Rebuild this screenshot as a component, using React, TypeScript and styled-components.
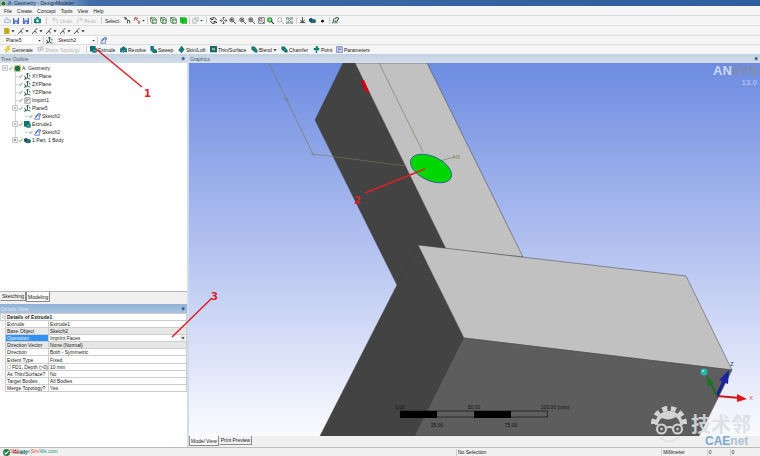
import React from "react";
import styled, { createGlobalStyle } from "styled-components";

const Global = createGlobalStyle`
  * { box-sizing: border-box; }
  body { margin: 0; background: #f0f0f0; color: #222; font: 5px/8px "Liberation Sans", Arial, sans-serif; }
  button, select, input { font: inherit; color: inherit; margin: 0; padding: 0; border: 0; background: none; }
`;

const Shell = styled.div`
  position: relative;
  display: flex;
  flex-direction: column;
  height: 100vh;
  overflow: hidden;
`;
const TitleBar = styled.header`
  display: flex;
  align-items: center;
  flex: none;
  height: 6px;
  overflow: hidden;
  gap: 2px;
  padding: 0 1px;
  color: #10233d;
  background: linear-gradient(90deg, #8fb0d5 0, #a9c1dc 50px, #3f6ca8 90px, #2f5e9e 100%);
`;
const MenuBar = styled.nav`
  display: flex;
  flex: none;
  height: 10px;
  align-items: center;
  gap: 5px;
  padding: 0 4px;
  border-bottom: 1px solid #dcdcdc;
  background: #f5f5f5;
`;
const MenuButton = styled.button`
  line-height: 8px;
`;
const Toolbar = styled.div`
  display: flex;
  flex: none;
  height: 10px;
  align-items: center;
  gap: 2px;
  padding: 0 4px;
  border-bottom: 1px solid #dedede;
  background: #f5f5f5;
  white-space: nowrap;
`;
const FeatureBar = styled(Toolbar)`
  height: 9px;
  border: 0;
`;
const PlaneBar = styled(Toolbar)`
  height: 9px;
`;
const ToolButton = styled.button<{ $w?: number; $off?: boolean }>`
  display: flex;
  flex: none;
  align-items: center;
  gap: 1px;
  height: 8px;
  width: ${(p) => (p.$w ? `${p.$w}px` : "auto")};
  color: ${(p) => (p.$off ? "#b8b8b8" : "#222")};
`;
const Separator = styled.i<{ $m?: number }>`
  flex: none;
  width: 1px;
  height: 7px;
  margin: 0 ${(p) => p.$m ?? 0}px;
  background: #cfcfcf;
`;
const Combo = styled.div<{ $w: number }>`
  display: flex;
  align-items: center;
  flex: none;
  width: ${(p) => p.$w}px;
  height: 8px;
  background: #fff;
  select { appearance: none; flex: 1; min-width: 0; height: 8px; padding: 0 2px; outline: 0; }
`;
const Workspace = styled.main`
  display: grid;
  flex: 1;
  min-height: 0;
  grid-template-columns: minmax(187px, 24.6%) minmax(0, 1fr);
  gap: 2px;
  background: #d0dded;
`;
const Side = styled.aside`
  display: flex;
  flex-direction: column;
  min-height: 0;
  background: #f0f0f0;
`;
const PanelHeader = styled.h2<{ $active?: boolean }>`
  display: flex;
  flex: none;
  justify-content: space-between;
  align-items: center;
  height: 9px;
  margin: 0;
  padding: 0 2px 0 1px;
  font: inherit;
  color: ${(p) => (p.$active ? "#d9e7f5" : "#4e5d70")};
  background: ${(p) => (p.$active ? "linear-gradient(#8fb2d6, #a9c4e0)" : "linear-gradient(#c3d1e0, #d3deea)")};
`;
const Tree = styled.ul`
  flex: 1;
  min-height: 0;
  margin: 0;
  padding: 1px 0 0;
  list-style: none;
  background: #fff;
`;
const TreeItem = styled.li<{ $depth: number; $last?: boolean }>`
  display: flex;
  align-items: center;
  height: 8px;
  gap: 1px;
  padding-left: ${(p) => [2, 12, 22][p.$depth]}px;
  background: linear-gradient(#d2d2d2, #d2d2d2) ${(p) => (p.$depth ? "15px" : "-9px")} 0 / 1px ${(p) => (p.$last ? "50%" : "100%")} no-repeat;
`;
const Blank = styled.i`
  flex: none;
  width: 6px;
  height: 1px;
  background: linear-gradient(#d2d2d2, #d2d2d2) 3px 0 no-repeat;
`;
const TabStrip = styled.div`
  display: flex;
  flex: none;
  align-items: flex-start;
  height: 13px;
  border-top: 1px solid #b4b4b4;
  background: #f0f0f0;
`;
const Tab = styled.button<{ $on?: boolean }>`
  height: ${(p) => (p.$on ? 10 : 9)}px;
  padding: 0 1px;
  border: 1px solid #8b8b8b;
  border-top: 0;
  border-left-color: ${(p) => (p.$on ? "#8b8b8b" : "transparent")};
  background: ${(p) => (p.$on ? "#fafafa" : "#f0f0f0")};
`;
const Details = styled.section`
  flex: none;
  height: 143px;
  background: #fff;
`;
const Properties = styled.table`
  width: 100%;
  height: 79px;
  border-collapse: collapse;
  table-layout: fixed;
  line-height: 6px;
  td, th { padding: 0 1px; border: 1px solid #cdcdcd; text-align: left; font-weight: 400; white-space: nowrap; overflow: hidden; }
  thead th { font-weight: 700; }
  col:nth-child(1) { width: 5px; }
  col:nth-child(2) { width: 43px; }
`;
const Row = styled.tr<{ $grey?: boolean; $on?: boolean }>`
  td { background: ${(p) => (p.$grey ? "#e6e6e6" : "#fff")}; }
  th { background: ${(p) => (p.$on ? "#3292f2" : p.$grey ? "#e9e9e9" : "#fff")}; color: ${(p) => (p.$on ? "#e9f4ff" : "#222")}; }
  td:first-child { border-color: transparent #cdcdcd transparent transparent; background: #f4f4f4; }
`;
const Operation = styled.div`
  display: flex;
  height: 6px;
  select { appearance: none; flex: 1; outline: 0; height: 6px; line-height: 6px; }
`;
const DropMark = styled.span`
  display: grid;
  place-items: center;
  width: 5px;
  background: #eaeaea;
`;
const Check = styled.label`
  display: flex;
  align-items: center;
  gap: 1px;
  input { appearance: none; flex: none; width: 4px; height: 4px; border: 1px solid #cfcfcf; }
`;
const Viewer = styled.section`
  display: flex;
  flex-direction: column;
  min-width: 0;
  min-height: 0;
`;
const Scene = styled.svg`
  display: block;
  flex: 1;
  min-height: 0;
  width: 100%;
  background: #6d8ce1;
`;
const ViewTabs = styled(TabStrip)`
  height: 11px;
  border: 0;
`;
const StatusBar = styled.footer`
  display: grid;
  flex: none;
  grid-template-columns: 60% 27% 6% 3% 1fr;
  align-items: center;
  height: 9px;
  border-top: 1px solid #bcbcbc;
  background: #f0f0f0;
  span { padding-left: 1px; border-left: 1px solid #d0d0d0; line-height: 7px; }
`;
const Ready = styled.div`
  display: flex;
  align-items: center;
  gap: 3px;
  padding-left: 3px;
`;
const ReadyText = styled.div`
  position: relative;
  line-height: 8px;
`;
const SiteMark = styled.b`
  position: absolute;
  left: -3px;
  top: -1px;
  color: #2d9c85;
  font-weight: 400;
  white-space: nowrap;
  em { font-style: normal; color: #e3483b; }
`;
const Overlay = styled.svg`
  position: absolute;
  inset: 0;
  width: 100%;
  height: 100%;
  pointer-events: none;
`;
const Glyph = styled.svg`
  display: block;
  flex: none;
`;

type Kind =
  | "save" | "open" | "camera" | "undo" | "redo" | "cursor" | "pick" | "cube" | "cubeOn" | "extend"
  | "rotate" | "pan" | "zoom" | "zoomBox" | "zoomOn" | "zoomOff" | "fit" | "axis" | "body" | "dot" | "look"
  | "yellow" | "edge" | "plane" | "sketch" | "bolt" | "share" | "extrude" | "revolve" | "sweep" | "skin"
  | "thin" | "blend" | "point" | "param" | "import" | "geo" | "down" | "check" | "plus" | "minus" | "pin" | "ok";

const teal = "#167f78";
const shapes: Record<Kind, React.ReactNode> = {
  open: <path d="M1 8V4l3-3 1 3h4v4z" fill="#e9eef8" stroke="#8aa0c8" />,
  save: <><path d="M0 0h10v10H0z" fill="#5068b8" /><path d="M2 0h6v4H2z" fill="#e5eefc" /><path d="M3 6h4v4H3z" fill="#b9cbec" /></>,
  camera: <><rect y="2" width="10" height="7" rx="1" fill={teal} /><path d="M3 0h4v2H3z" fill={teal} /><circle cx="5" cy="5.500" r="2" fill="#d5f2e8" /></>,
  undo: <path d="M3 1 1 4l4 1M1 4c4-4 9 0 6 5" fill="none" stroke="#bbb" />,
  redo: <path d="m7 1 2 3-4 1m4-1C5 0 0 4 3 9" fill="none" stroke="#bbb" />,
  cursor: <path d="M0 1h3l2 4v4m0-4h3v4M2 1v3" fill="none" stroke="#444" strokeWidth="1.300" />,
  pick: <path d="M1 5V1l5 1M2 2l5 5v3m0-3h2" fill="none" stroke="#a83a42" strokeWidth="1.300" />,
  cube: <><path d="M1 1h6l2 2v6H3L1 7z" fill="#d9efd2" stroke="#245d30" /><path d="m1 1 3 3h5M4 4v5" stroke="#245d30" fill="none" /></>,
  cubeOn: <><path d="M0 1h8l2 2v6H3L0 7z" fill="#16d61c" stroke="#15991e" /><path d="m1 1 3 3h5M4 4v5" stroke="#168b20" fill="none" /></>,
  extend: <path d="M1 3h5v6H1zM4 3V1h5v5H6" fill="#e4eee4" stroke="#a9b8a9" />,
  rotate: <path d="M9 4C8 0 3 0 2 3M0 1l2 3 3-1M1 6c1 4 6 4 7 1m2 2L8 6 5 7" fill="none" stroke="#222" strokeWidth="1.400" />,
  pan: <path d="M5 0v4m0 2v4M0 5h4m2 0h4M3 2l2-2 2 2M3 8l2 2 2-2M2 3 0 5l2 2M8 3l2 2-2 2" fill="none" stroke="#444" />,
  zoom: <><circle cx="4" cy="4" r="3" fill="#dce8e7" stroke="#444" /><path d="M2 4h4M4 2v4m2 0 4 4" stroke="#333" strokeWidth="1.200" /></>,
  zoomBox: <><path d="M1 1h8v8H1z" fill="#fff" stroke="#444" /><circle cx="4" cy="4" r="2" fill="#ddd" stroke="#444" /><path d="m6 6 3 3" stroke="#333" /></>,
  zoomOn: <><circle cx="4" cy="4" r="3" fill="#8bdc8e" stroke="#268a37" strokeWidth="1.500" /><path d="m6 6 4 4" stroke="#333" strokeWidth="1.500" /></>,
  zoomOff: <><circle cx="4" cy="4" r="3" fill="none" stroke="#999" /><path d="m6 6 4 4" stroke="#999" /></>,
  fit: <path d="M0 1h4v2H0zM6 1h4v2H6zM0 7h4v2H0zM6 7h4v2H6zM3 3l4 4m0-4L3 7" fill="none" stroke="#52796d" />,
  axis: <path d="M5 0v7M1 8h8M2 4l3 4 3-4" fill="none" stroke="#333" strokeWidth="1.200" />,
  body: <><path d="m0 3 3-2 4 3v3L4 9 0 6z" fill="#244f78" /><circle cx="7" cy="6" r="3" fill="#25726e" /></>,
  dot: <circle cx="5" cy="6" r="2" fill="#111" />,
  look: <path d="M1 9 3 2M5 3c0-3 5-3 4 0L7 6v3M4 9l1-4" fill="none" stroke="#225b36" strokeWidth="1.500" />,
  yellow: <><path d="M0 0h9v10H0z" fill="#cdbb22" /><path d="M3 0v10M6 0v10M0 5h9" stroke="#a3951d" /></>,
  edge: <path d="M0 10 9 0M4 6c2-1 3 0 3 3" fill="none" stroke="#333" strokeWidth="1.400" />,
  plane: <path d="M5 0v7M0 9l5-2 4 2M3 2l2-2 2 2M1 4l2 5m4-5h2" fill="none" stroke="#264f43" strokeWidth="1.300" />,
  sketch: <><path d="M3 3h5v6H1z" fill="#dfe8ff" stroke="#5771ba" /><path d="m3 6 3-5h3v3" stroke="#334fac" strokeWidth="1.200" fill="none" /></>,
  bolt: <path d="M5 0 1 6h3L2 10l7-6H6l3-4z" fill="#f1d92c" stroke="#b6a21b" strokeWidth=".5" />,
  share: <path d="M1 2h4v5H1zM5 1h4v5H5z" fill="#ddd" stroke="#bbb" />,
  extrude: <><path d="M0 0h8v8H0z" fill="#126f75" /><path d="M4 4h5v5H4z" fill="#27aaa0" stroke="#0b5555" /></>,
  revolve: <><path d="M0 5c0-5 10-5 10 0v4H6V6H4v3H0z" fill={teal} /><path d="M5 0v10" stroke="#264989" /></>,
  sweep: <path d="M1 0h4v4l5 2v4H5L1 6z" fill={teal} stroke="#0a5054" strokeWidth=".6" />,
  skin: <path d="M5 0 9 5 5 10 1 6z" fill={teal} stroke="#0a5054" strokeWidth=".6" />,
  thin: <><path d="M0 0h10v9H0z" fill="#176a68" /><path d="M3 3h4v3H3z" fill="#82c4ab" /></>,
  blend: <path d="M1 1h4l4 5v3H6L1 5z" fill={teal} stroke="#0a5054" strokeWidth=".6" />,
  point: <path d="M1 3h3V0h3v3h2v3H6v4H4V6H1z" fill={teal} />,
  param: <><path d="M1 1h8v8H1z" fill="#dce7fc" stroke="#4157a3" /><path d="M3 3h4M3 5h4M3 7h2" stroke="#4157a3" /></>,
  import: <><path d="M1 1h8v8H1z" fill="#eee" stroke="#8c8c8c" /><path d="M3 7V3h4L3 7" stroke="#777" fill="none" /></>,
  geo: <><path d="M0 0h10v10H0z" fill="#d8cd79" /><circle cx="5" cy="5" r="4" fill="#176f5a" /></>,
  down: <path d="M1 3h8L5 8z" fill="#222" />,
  check: <path d="m1 6 2 3 6-7" fill="none" stroke="#35943b" strokeWidth="2" />,
  plus: <><path d="M1 1h8v8H1z" fill="#fff" stroke="#999" /><path d="M3 5h4M5 3v4" stroke="#345" /></>,
  minus: <><path d="M1 1h8v8H1z" fill="#fff" stroke="#999" /><path d="M3 5h4" stroke="#345" /></>,
  pin: <path d="M3 1h5v5H3zM1 6h8M5 6v4" fill="#345a84" stroke="#345a84" />,
  ok: <><circle cx="5" cy="5" r="5" fill="#267a42" /><path d="m2 5 2 2 4-4" fill="none" stroke="#fff" strokeWidth="1.500" /></>,
};
const Icon = ({ kind, size = 7 }: { kind: Kind; size?: number }) => (
  <Glyph width={size} height={size} viewBox="0 0 10 10" aria-hidden="true">{shapes[kind]}</Glyph>
);

const features: [Kind, string, number][] = [
  ["extrude", "Extrude", 28], ["revolve", "Revolve", 28], ["sweep", "Sweep", 26], ["skin", "Skin/Loft", 30],
  ["thin", "Thin/Surface", 39], ["blend", "Blend", 28], ["blend", "Chamfer", 30], ["point", "Point", 21], ["param", "Parameters", 36],
];
const tree: [number, Kind | null, Kind, string][] = [
  [0, "minus", "geo", "A: Geometry"], [1, null, "plane", "XYPlane"], [1, null, "plane", "ZXPlane"],
  [1, null, "plane", "YZPlane"], [1, null, "import", "Import1"], [1, "minus", "plane", "Plane5"],
  [2, null, "sketch", "Sketch2"], [1, "minus", "extrude", "Extrude1"], [2, null, "sketch", "Sketch2"],
  [1, "plus", "body", "1 Part, 1 Body"],
];
const properties: [string, string, boolean?][] = [
  ["Extrude", "Extrude1"], ["Base Object", "Sketch2", true], ["Operation", "Imprint Faces"],
  ["Direction Vector", "None (Normal)", true], ["Direction", "Both - Symmetric"], ["Extent Type", "Fixed"],
  ["FD1,  Depth (>0)", "10 mm"], ["As Thin/Surface?", "No"], ["Target Bodies", "All Bodies"], ["Merge Topology?", "Yes"],
];

const Model = () => (
  <Scene viewBox="189 63 571 373" preserveAspectRatio="xMidYMid slice" role="img" aria-label="Extruded model">
    <defs>
      <linearGradient id="sky" x1="0" y1="0" x2="0" y2="1">
        <stop stopColor="#6d8ce1" /><stop offset=".5" stopColor="#b4c2f0" /><stop offset="1" stopColor="#fafbff" />
      </linearGradient>
    </defs>
    <path d="M-400 63H1500V436H-400z" fill="url(#sky)" />
    <g stroke="#404040" strokeWidth=".5" strokeLinejoin="round">
      <path d="M343 63 315 120 397 285 446 249 355 63z" fill="#434343" />
      <path d="M355 63 446 249 523 257 427 63z" fill="#c1c1c1" />
      <path d="M418 245 397 285 320 436H415L464 338z" fill="#434343" />
      <path d="M418 245 686 276 732 370 464 338z" fill="#c1c1c1" />
      <path d="M464 338 732 370 699 436H415z" fill="#5d5d5d" />
    </g>
    <path d="M361 80 364 80 370 94 364 90z" fill="#d40016" />
    <g fill="none" stroke="#78784c" strokeWidth=".6">
      <path d="M269 63 313 154 406 166M440 161 454 157M379 63 423 152" />
      <path d="m284 98 5 3M285 101l3-3M311 153l4 3M454 155v4m0-2h3m0-2v4m2-4v4" />
    </g>
    <ellipse cx="431" cy="168.500" rx="22" ry="12" transform="rotate(25 431 168.500)" fill="#00d600" stroke="#285799" strokeWidth=".8" />
    <g fontSize="5" fill="#111" fontFamily="Liberation Sans" textAnchor="middle">
      <rect x="400.500" y="411" width="147" height="6" fill="#5e5e5e" stroke="#161616" strokeWidth=".7" />
      <path d="M400 411h37v7h-37zM474 411h37v7h-37z" fill="#000" />
      <text x="400" y="409">0.00</text><text x="474" y="409">50.00</text><text x="555" y="409">100.00 (mm)</text>
      <text x="437" y="427">25.00</text><text x="511" y="427">75.00</text>
    </g>
    <g fontFamily="Liberation Sans" fontWeight="700">
      <text x="713" y="75" fontSize="13" fill="#cbd8fb">AN<tspan fill="#858d99">SYS</tspan></text>
      <text x="757" y="85" fontSize="8" fill="#c3cff5" fontWeight="400" textAnchor="end">13.0</text>
    </g>
    <g strokeWidth="2">
      <path d="m717 396 23 2" stroke="#cc1919" /><path d="m737 394 10 5-10 3z" fill="#df1717" />
      <path d="m717 396 7-15" stroke="#182293" strokeWidth="3" /><path d="m719 380 10-10-1 14z" fill="#1b22a5" />
      <path d="m717 396-7-14" stroke="#147222" /><path d="m706 375 8 8-6 3z" fill="#187526" />
      <circle cx="704" cy="372" r="3.500" fill="#22b5ad" /><circle cx="703" cy="371" r="1.200" fill="#84e7dd" />
    </g>
    <g fontFamily="Liberation Sans" fontSize="6">
      <text x="749" y="400" fill="#de4d56">X</text><text x="730" y="366" fill="#253a97">Z</text>
    </g>
  </Scene>
);

export default function App() {
  return (
    <Shell>
      <Global />
      <TitleBar><Icon kind="geo" size={5} />A: Geometry - DesignModeler</TitleBar>
      <MenuBar>
        {["File", "Create", "Concept", "Tools", "View", "Help"].map((m) => <MenuButton key={m}>{m}</MenuButton>)}
      </MenuBar>
      <Toolbar>
        <ToolButton aria-label="Open"><Icon kind="open" /></ToolButton>
        <ToolButton aria-label="Save" $w={8}><Icon kind="save" size={6} /></ToolButton>
        <ToolButton aria-label="Save as"><Icon kind="save" size={6} /></ToolButton>
        <Separator />
        <ToolButton aria-label="Capture"><Icon kind="camera" /></ToolButton>
        <Separator $m={3} />
        <ToolButton $off $w={22}><Icon kind="undo" />Undo</ToolButton>
        <ToolButton $off $w={22}><Icon kind="redo" />Redo</ToolButton>
        <Separator $m={1} />
        <ToolButton $w={17}>Select:</ToolButton>
        <ToolButton aria-label="New selection" $w={8}><Icon kind="cursor" /></ToolButton>
        <ToolButton aria-label="Select mode"><Icon kind="pick" /><Icon kind="down" size={3} /></ToolButton>
        <Separator />
        {["Points", "Edges", "Faces"].map((n) => <ToolButton key={n} $w={8} aria-label={n}><Icon kind="cube" /></ToolButton>)}
        <ToolButton aria-label="Bodies"><Icon kind="cubeOn" /></ToolButton>
        <Separator />
        <ToolButton aria-label="Extend"><Icon kind="extend" /><Icon kind="down" size={3} /></ToolButton>
        <Separator $m={1} />
        {(["rotate", "pan", "zoom", "zoom", "zoom", "zoomBox", "zoomOn", "zoomOff", "fit"] as Kind[]).map((k, i) => (
          <ToolButton key={i} $w={i % 2 ? 7 : 8} aria-label={`${k} ${i + 1}`}><Icon kind={k} /></ToolButton>
        ))}
        <Separator />
        {(["axis", "body", "dot"] as Kind[]).map((k) => <ToolButton key={k} $w={8} aria-label={k}><Icon kind={k} /></ToolButton>)}
        <Separator />
        <ToolButton aria-label="Look at"><Icon kind="look" /></ToolButton>
      </Toolbar>
      <Toolbar>
        {(["yellow", "edge", "edge", "edge", "edge", "edge"] as Kind[]).map((k, i) => (
          <ToolButton key={i} $w={12} aria-label={`Edge colour ${i + 1}`}><Icon kind={k} size={6} /><Icon kind="down" size={4} /></ToolButton>
        ))}
      </Toolbar>
      <PlaneBar>
        <Combo $w={37}><select aria-label="Plane"><option>Plane5</option></select><Icon kind="down" size={3} /></Combo>
        <Separator />
        <ToolButton $w={8} aria-label="New plane"><Icon kind="plane" /></ToolButton>
        <Combo $w={39}><select aria-label="Sketch"><option>Sketch2</option></select><Icon kind="down" size={3} /></Combo>
        <Separator />
        <ToolButton aria-label="New sketch"><Icon kind="sketch" /></ToolButton>
      </PlaneBar>
      <FeatureBar>
        <ToolButton $w={31}><Icon kind="bolt" />Generate</ToolButton>
        <ToolButton $w={46} $off><Icon kind="share" />Share Topology</ToolButton>
        <Separator $m={1} />
        {features.map(([k, name, w]) => (
          <ToolButton key={name} $w={w}><Icon kind={k} />{name}{name === "Blend" && <Icon kind="down" size={4} />}</ToolButton>
        ))}
      </FeatureBar>
      <Workspace>
        <Side>
          <PanelHeader>Tree Outline<Icon kind="pin" size={4} /></PanelHeader>
          <Tree>
            {tree.map(([depth, toggle, kind, name], i) => (
              <TreeItem key={i} $depth={depth} $last={i === tree.length - 1}>
                {toggle ? <Icon kind={toggle} size={6} /> : <Blank />}
                <Icon kind="check" size={4} /><Icon kind={kind} />{name}
              </TreeItem>
            ))}
          </Tree>
          <TabStrip><Tab>Sketching</Tab><Tab $on>Modeling</Tab></TabStrip>
          <Details>
            <PanelHeader $active>Details View<Icon kind="pin" size={4} /></PanelHeader>
            <Properties>
              <colgroup><col /><col /><col /></colgroup>
              <thead><tr><th><Icon kind="minus" size={4} /></th><th colSpan={2}>Details of Extrude1</th></tr></thead>
              <tbody>
                {properties.map(([name, value, grey]) => (
                  <Row key={name} $grey={grey} $on={name === "Operation"}>
                    <td />
                    <th scope="row">{name.startsWith("FD1") ? <Check><input type="checkbox" />{name}</Check> : name}</th>
                    <td>{name === "Operation"
                      ? <Operation><select aria-label={name}><option>{value}</option></select><DropMark><Icon kind="down" size={4} /></DropMark></Operation>
                      : value}</td>
                  </Row>
                ))}
              </tbody>
            </Properties>
          </Details>
        </Side>
        <Viewer>
          <PanelHeader>Graphics<Icon kind="pin" size={4} /></PanelHeader>
          <Model />
          <ViewTabs><Tab $on>Model View</Tab><Tab>Print Preview</Tab></ViewTabs>
        </Viewer>
      </Workspace>
      <StatusBar>
        <Ready><Icon kind="ok" /><ReadyText>Ready<SiteMark><em>SIM</em>www.<em>Sim</em>We.com</SiteMark></ReadyText></Ready>
        <span>No Selection</span><span>Millimeter</span><span>0</span><span>0</span>
      </StatusBar>
      <Overlay viewBox="0 0 760 456" preserveAspectRatio="xMinYMin meet">
        <path d="M96 49 142 87M365 193 425 169M172 337 212 298" stroke="#dc2028" strokeWidth="1.500" />
        <g fill="#dc2028" fontFamily="DejaVu Sans" fontSize="10" fontWeight="700">
          <text x="144" y="97">1</text><text x="354" y="204">2</text><text x="211" y="300">3</text>
        </g>
        <g opacity=".88">
          <path d="M655 425a14 14 0 0 1 28 0h-3c0-4-2-6-4-8-5 3-10 3-14 1-2 1-4 4-4 7z" fill="#e4e4e4" />
          <path d="M653.500 424a15.500 15.500 0 0 1 31 0" fill="none" stroke="#e4e4e4" strokeWidth="5" strokeDasharray="5 3.730" />
          <g fill="none" stroke="#e4e4e4" strokeWidth="2">
            <circle cx="661.500" cy="429" r="4.500" /><circle cx="677.500" cy="429" r="4.500" />
            <path d="M666 428q3.500-2 7 0" /><path d="M659 437q10 9 20 0" />
          </g>
          <circle cx="661.500" cy="429" r="1.200" fill="#e4e4e4" /><circle cx="677.500" cy="429" r="1.200" fill="#e4e4e4" />
          <text x="691" y="432" fontSize="20" fontWeight="700" fill="#dcdee2" fontFamily="Noto Sans CJK SC, sans-serif">技术邻</text>
          <text x="705" y="445" fontSize="12" fontWeight="700" fontFamily="Liberation Sans" fill="#6f9fca">CAE<tspan fill="#a5bdd2">net</tspan></text>
        </g>
      </Overlay>
    </Shell>
  );
}
